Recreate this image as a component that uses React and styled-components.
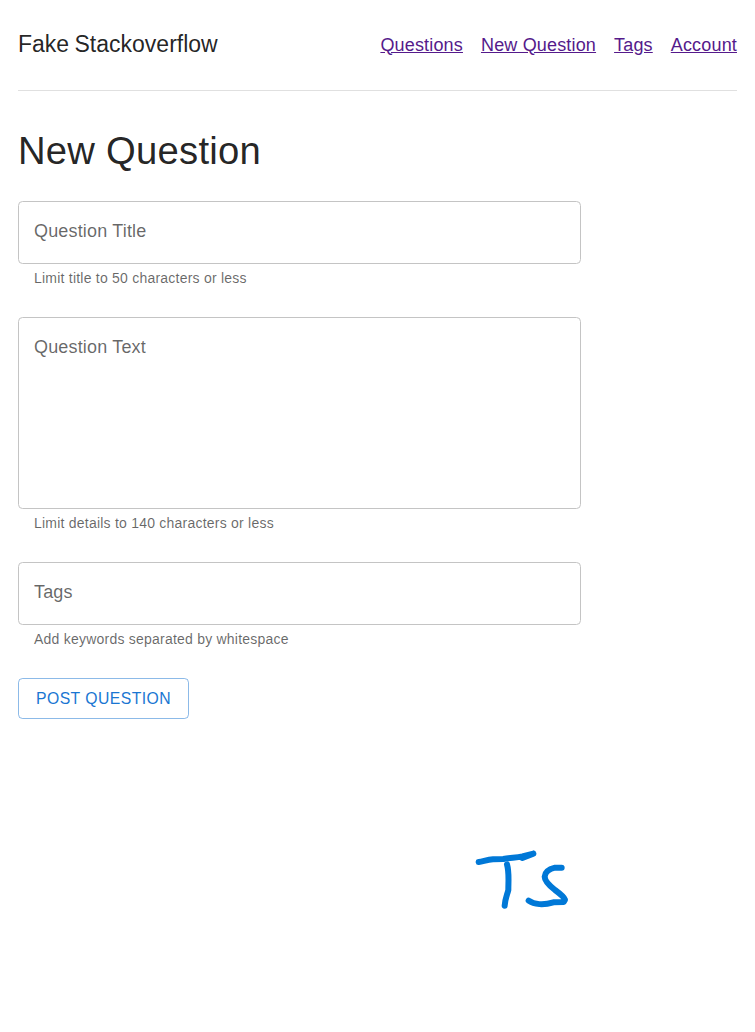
import React from "react";
import styled, { createGlobalStyle } from "styled-components";

const GlobalStyle = createGlobalStyle`
  *, *::before, *::after { box-sizing: border-box; }
  body {
    margin: 0;
    background: #fff;
    color: rgba(0, 0, 0, 0.87);
    font-family: "Liberation Sans", Arial, sans-serif;
    font-size: 18px;
  }
`;

const Page = styled.div`
  min-height: 1032px;
  padding: 0 18px;
`;

const Header = styled.header`
  display: flex;
  align-items: center;
  justify-content: space-between;
  height: 91px;
  padding-bottom: 2px;
  border-bottom: 1px solid #e0e0e0;
`;

const Brand = styled.div`
  font-size: 23px;
  line-height: 36px;
  word-spacing: -1px;
`;

const Nav = styled.nav`
  display: flex;
  gap: 18px;
  padding-top: 2px;
`;

const NavLink = styled.a`
  color: #551a8b;
  line-height: 27px;
  letter-spacing: 0.00938em;
  text-decoration: underline;
`;

const Title = styled.h1`
  margin: 36px 0 26px;
  font-size: 38.25px;
  font-weight: 400;
  line-height: 48px;
  letter-spacing: 0.006em;
`;

const Form = styled.form`
  display: flex;
  flex-direction: column;
  align-items: flex-start;
  gap: 27px;
  width: 563px;
`;

const Field = styled.label`
  display: flex;
  flex-direction: column;
  width: 100%;
`;

const Control = styled.input`
  display: block;
  width: 100%;
  height: ${({ $height }) => $height}px;
  padding: 16px 15px 18px;
  border: 1px solid #c4c4c4;
  border-radius: 4.5px;
  outline: none;
  background: #fff;
  color: rgba(0, 0, 0, 0.87);
  font: inherit;
  line-height: 26px;
  letter-spacing: 0.00938em;
  resize: none;

  &::placeholder {
    color: rgba(0, 0, 0, 0.6);
    opacity: 1;
  }
`;

const Helper = styled.span`
  margin: 3px 16px 0;
  color: rgba(0, 0, 0, 0.6);
  font-size: 14px;
  line-height: 23px;
  letter-spacing: 0.225px;
`;

const PostButton = styled.button`
  height: 41px;
  padding: 0 17px;
  border: 1px solid rgba(25, 118, 210, 0.5);
  border-radius: 4.5px;
  background: transparent;
  color: #1976d2;
  font: inherit;
  font-size: 15.75px;
  letter-spacing: 0.02857em;
  text-transform: uppercase;
`;

const Signature = styled.svg`
  display: block;
  width: 130px;
  height: 90px;
  margin: 116px 0 0 442px;
  fill: none;
  stroke: #0078d7;
  stroke-width: 18;
  stroke-linecap: round;
  stroke-linejoin: round;
`;

const links = ["Questions", "New Question", "Tags", "Account"];

const fields = [
  { label: "Question Title", hint: "Limit title to 50 characters or less", height: 63 },
  { label: "Question Text", hint: "Limit details to 140 characters or less", height: 192, as: "textarea" },
  { label: "Tags", hint: "Add keywords separated by whitespace", height: 63 },
];

export default function App() {
  return (
    <>
      <GlobalStyle />
      <Page>
        <Header>
          <Brand>Fake Stackoverflow</Brand>
          <Nav>
            {links.map((link) => (
              <NavLink key={link} href="#">{link}</NavLink>
            ))}
          </Nav>
        </Header>
        <Title>New Question</Title>
        <Form>
          {fields.map(({ label, hint, height, as }) => (
            <Field key={label}>
              <Control as={as} placeholder={label} $height={height} />
              <Helper>{hint}</Helper>
            </Field>
          ))}
          <PostButton type="button">Post Question</PostButton>
        </Form>
        <Signature viewBox="0 0 390 270" aria-hidden="true">
          <path d="M56 81 C70 79 82 74 99 73 L130 72 C150 68 167 68 187 64 L220 56 M187 69 L220 56" />
          <path d="M141 88 C148 113 145 135 145 165 C141 181 135 193 134 212" />
          <path d="M305 98 L285 98 C268 102 255 112 254 125 C254 139 270 153 285 165 C300 176 312 185 315 194 L311 201 L280 202 C251 211 222 209 206 197" />
        </Signature>
      </Page>
    </>
  );
}
